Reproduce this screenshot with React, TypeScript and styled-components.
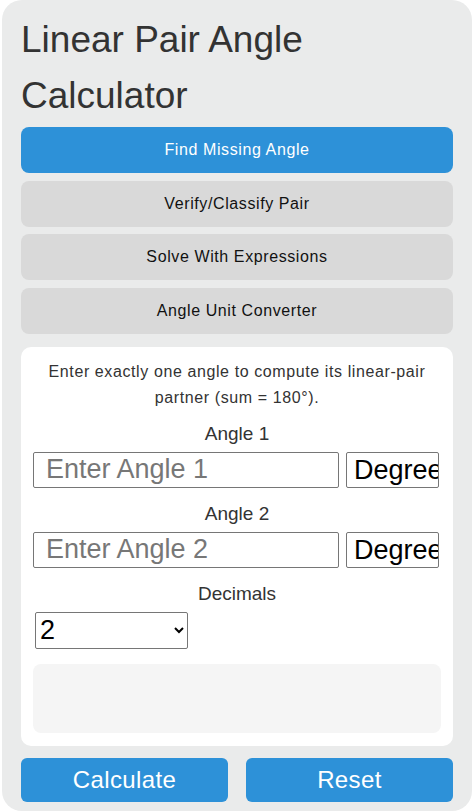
import styled, { createGlobalStyle } from 'styled-components';

const GlobalStyle = createGlobalStyle`
	html, body {
		margin: 0;
		padding: 0;
		background: #ffffff;
	}
	body {
		font-family: "Liberation Sans", Arial, sans-serif;
	}
`;

const tabs = ['Find Missing Angle', 'Verify/Classify Pair', 'Solve With Expressions', 'Angle Unit Converter'];

const App = () => {
	return (
		<>
			<GlobalStyle />
			<Container>
				<Title>Linear Pair Angle Calculator</Title>
				<TabList>
					{tabs.map((tab, i) => (
						<Tab key={tab} $active={i === 0}>
							{tab}
						</Tab>
					))}
				</TabList>
				<Card>
					<Description>Enter exactly one angle to compute its linear-pair partner (sum = 180°).</Description>
					<Label>Angle 1</Label>
					<InputRow>
						<AngleInput placeholder="Enter Angle 1" />
						<UnitSelect defaultValue="deg">
							<option value="deg">Degrees</option>
							<option value="rad">Radians</option>
						</UnitSelect>
					</InputRow>
					<Label>Angle 2</Label>
					<InputRow>
						<AngleInput placeholder="Enter Angle 2" />
						<UnitSelect defaultValue="deg">
							<option value="deg">Degrees</option>
							<option value="rad">Radians</option>
						</UnitSelect>
					</InputRow>
					<Label>Decimals</Label>
					<DecimalsSelect defaultValue="2">
						<option value="0">0</option>
						<option value="1">1</option>
						<option value="2">2</option>
						<option value="3">3</option>
						<option value="4">4</option>
					</DecimalsSelect>
					<ResultBox />
				</Card>
				<ActionRow>
					<ActionButton>Calculate</ActionButton>
					<ActionButton>Reset</ActionButton>
				</ActionRow>
			</Container>
		</>
	);
};

const Container = styled.div`
	width: 470px;
	box-sizing: border-box;
	margin: 0 3px 0 2px;
	padding: 12px 19px 9px;
	background: #eaebeb;
	border-radius: 20px;
	display: flex;
	flex-direction: column;
`;

const Title = styled.h1`
	margin: 0 0 3px;
	font-size: 37px;
	line-height: 56px;
	font-weight: 400;
	color: #333333;
`;

const TabList = styled.div`
	display: flex;
	flex-direction: column;
	gap: 7.5px;
`;

const Tab = styled.button<{ $active: boolean }>`
	height: 46px;
	border: none;
	border-radius: 8px;
	font-family: "Liberation Sans", Arial, sans-serif;
	font-size: 16px;
	letter-spacing: 0.6px;
	color: ${(p) => (p.$active ? '#ffffff' : '#111111')};
	background: ${(p) => (p.$active ? '#2d91d8' : '#d9d9d9')};
	cursor: pointer;
`;

const Card = styled.div`
	margin-top: 13px;
	background: #ffffff;
	border-radius: 10px;
	padding: 12px 12px 13px;
	display: flex;
	flex-direction: column;
	align-items: stretch;
`;

const Description = styled.p`
	margin: 0 0 10px;
	font-size: 16px;
	letter-spacing: 0.6px;
	line-height: 26px;
	text-align: center;
	color: #333333;
`;

const Label = styled.div`
	margin-bottom: 5px;
	font-size: 19px;
	line-height: 26px;
	text-align: center;
	color: #333333;
`;

const InputRow = styled.div`
	display: flex;
	gap: 7px;
	align-items: center;
	margin-bottom: 13px;
`;

const AngleInput = styled.input`
	width: 306px;
	height: 36px;
	box-sizing: border-box;
	border: 1px solid #767676;
	border-radius: 2px;
	padding: 0 12px;
	font-family: "Liberation Sans", Arial, sans-serif;
	font-size: 27px;
	color: #000;
	outline: none;
	&::placeholder {
		color: #777777;
	}
`;

const UnitSelect = styled.select`
	width: 93px;
	height: 36px;
	box-sizing: border-box;
	border: 1px solid #767676;
	border-radius: 2px;
	padding: 0 0 0 7px;
	appearance: none;
	background: #ffffff;
	font-family: "Liberation Sans", Arial, sans-serif;
	font-size: 27px;
	color: #000;
`;

const DecimalsSelect = styled.select`
	align-self: flex-start;
	margin: 0 0 0 2px;
	width: 153px;
	height: 37px;
	box-sizing: border-box;
	border: 1px solid #767676;
	border-radius: 2px;
	background: #ffffff;
	font-family: "Liberation Sans", Arial, sans-serif;
	font-size: 27px;
	color: #000;
`;

const ResultBox = styled.div`
	margin-top: 15px;
	height: 69px;
	background: #f5f5f5;
	border-radius: 8px;
`;

const ActionRow = styled.div`
	margin-top: 12px;
	display: grid;
	grid-template-columns: 1fr 1fr;
	gap: 18px;
`;

const ActionButton = styled.button`
	height: 44px;
	border: none;
	border-radius: 6px;
	background: #2d91d8;
	color: #ffffff;
	font-family: "Liberation Sans", Arial, sans-serif;
	font-size: 24px;
	letter-spacing: 0.4px;
	cursor: pointer;
`;

export default App;
